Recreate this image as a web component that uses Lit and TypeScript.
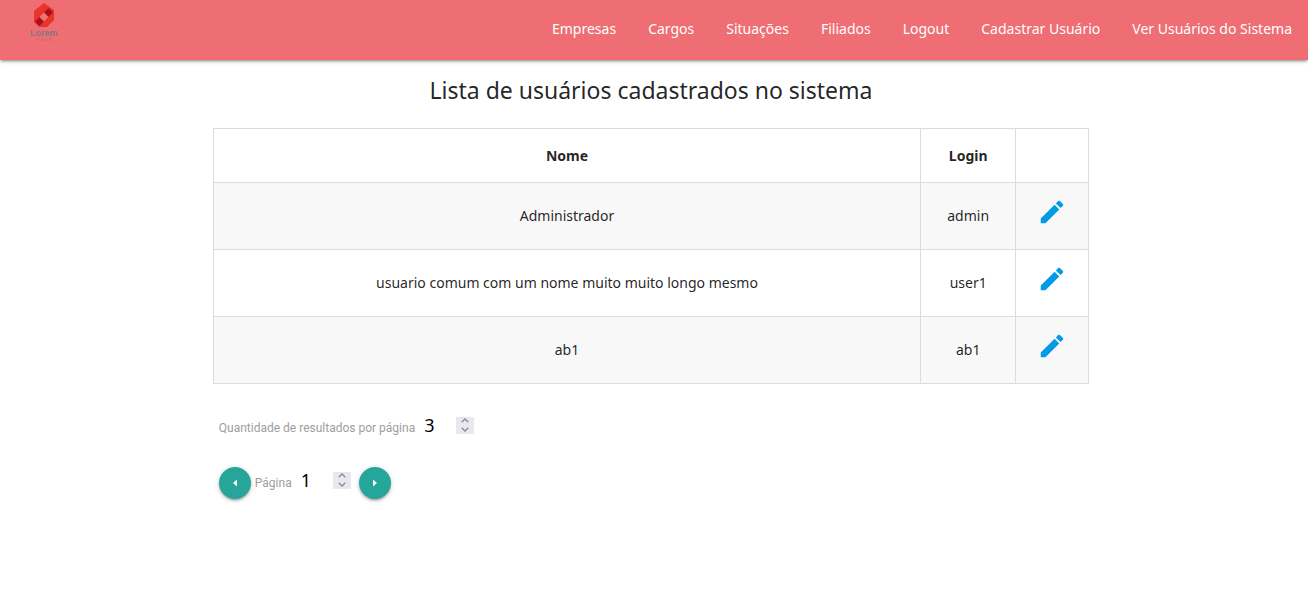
import { LitElement, html, css } from "lit";
import { customElement, property, state } from "lit/decorators.js";

interface User {
  name: string;
  login: string;
}

@customElement("number-stepper")
class NumberStepper extends LitElement {
  @property() label = "";
  @property({ type: Number }) value = 1;

  static styles = css`
    :host {
      display: inline-flex;
      align-items: center;
      box-sizing: border-box;
      height: 44px;
      padding-bottom: 6px;
    }
    label {
      margin-right: 9px;
      padding-top: 6px;
      font: 12px/20px Roboto, sans-serif;
      color: #9e9e9e;
    }
    input {
      width: 32px;
      height: 28px;
      padding: 0;
      border: 0;
      outline: 0;
      background: transparent;
      color: #000;
      font: 18px/28px "Noto Sans", sans-serif;
      appearance: textfield;
    }
    input::-webkit-inner-spin-button {
      appearance: none;
      margin: 0;
    }
    .spin {
      display: flex;
      flex-direction: column;
      width: 18px;
      height: 17px;
      background: #e9e9ed;
    }
    button {
      display: flex;
      flex: 1;
      align-items: center;
      justify-content: center;
      min-height: 0;
      padding: 0;
      border: 0;
      background: transparent;
    }
    svg {
      width: 8px;
      height: 5px;
      fill: none;
      stroke: #8f8f9d;
      stroke-width: 1.5;
    }
  `;

  private step(by: number) {
    this.value = Math.max(1, this.value + by);
  }

  render() {
    return html`
      <label for="field">${this.label}</label>
      <input id="field" type="number" min="1" .value=${String(this.value)} />
      <span class="spin">
        <button aria-label="Aumentar" @click=${() => this.step(1)}>
          <svg viewBox="0 0 8 5"><path d="M.7 4.2 4 1l3.300 3.200" /></svg>
        </button>
        <button aria-label="Diminuir" @click=${() => this.step(-1)}>
          <svg viewBox="0 0 8 5"><path d="M.7.8 4 4 7.300.8" /></svg>
        </button>
      </span>
    `;
  }
}

@customElement("app-root")
class AppRoot extends LitElement {
  @state() private links = [
    "Empresas",
    "Cargos",
    "Situações",
    "Filiados",
    "Logout",
    "Cadastrar Usuário",
    "Ver Usuários do Sistema",
  ];

  @state() private users: User[] = [
    { name: "Administrador", login: "admin" },
    { name: "usuario comum com um nome muito muito longo mesmo", login: "user1" },
    { name: "ab1", login: "ab1" },
  ];

  static styles = css`
    :host {
      display: block;
      font: 14px/22px "Noto Sans", sans-serif;
      color: rgba(0, 0, 0, 0.87);
    }
    nav {
      display: flex;
      justify-content: space-between;
      height: 60px;
      background: #ee6e73;
      box-shadow:
        0 2px 2px 0 rgba(0, 0, 0, 0.14),
        0 3px 1px -2px rgba(0, 0, 0, 0.12),
        0 1px 5px 0 rgba(0, 0, 0, 0.2);
    }
    .logo {
      display: flex;
      flex-direction: column;
      align-items: center;
      margin-left: 30px;
      padding-top: 3px;
      color: #85757d;
      text-decoration: none;
    }
    .logo svg {
      width: 20px;
      height: 24px;
    }
    .word {
      padding-top: 2px;
      font: bold 9px/9px "Liberation Sans", sans-serif;
    }
    .sub {
      font: 4px/4px "Liberation Sans", sans-serif;
      letter-spacing: 1px;
      opacity: 0.7;
    }
    ul {
      display: flex;
      margin: 0;
      padding: 0;
      list-style: none;
    }
    li a {
      display: block;
      padding: 0 16px;
      line-height: 58px;
      color: #fff;
      text-decoration: none;
      white-space: nowrap;
    }
    main {
      width: 67%;
      margin: 0 auto;
      padding-right: 6px;
    }
    h1 {
      margin: 0;
      padding: 14px 0 21px;
      font-size: 23px;
      font-weight: 400;
      line-height: 33px;
      text-align: center;
    }
    table {
      width: 100%;
      border-collapse: collapse;
    }
    th,
    td {
      box-sizing: border-box;
      padding: 0;
      border: 1px solid #dcdcdc;
      text-align: center;
    }
    th {
      height: 54px;
    }
    td {
      height: 67px;
    }
    tbody tr:nth-child(odd) {
      background: #f8f8f8;
    }
    .login {
      width: 95px;
    }
    .action {
      width: 73px;
    }
    .edit {
      display: inline-flex;
      padding-bottom: 8px;
      vertical-align: middle;
    }
    .edit svg {
      width: 30px;
      height: 30px;
      fill: #039be5;
    }
    .controls {
      padding: 22px 6px;
    }
    .pager {
      display: flex;
      align-items: center;
      gap: 4px;
      padding-top: 11px;
    }
    .round {
      display: flex;
      align-items: center;
      justify-content: center;
      width: 32px;
      height: 32px;
      padding: 0;
      border: 0;
      border-radius: 50%;
      background: #26a69a;
      box-shadow:
        0 2px 2px 0 rgba(0, 0, 0, 0.14),
        0 3px 1px -2px rgba(0, 0, 0, 0.12),
        0 1px 5px 0 rgba(0, 0, 0, 0.2);
    }
    .next {
      margin-left: 4px;
    }
    .round svg {
      width: 16px;
      height: 16px;
      fill: #fff;
    }
  `;

  render() {
    return html`
      <nav>
        <a class="logo" href="#">
          <svg viewBox="0 0 20 24" aria-hidden="true">
            <path fill="#e8352b" d="M10 0 20 7V17L13 24H5L0 19V8Z" />
            <path fill="#a90f22" d="M14.500 5 19 9.500 14.500 14 10 9.500Z" />
            <path fill="#a90f22" d="M5.500 14 10 18.500 5.500 23 1 18.500Z" />
            <path fill="#f0736f" d="M10 9.500 14.500 14 10 18.500 5.500 14Z" />
          </svg>
          <span class="word">Lorem</span>
          <span class="sub">IPSUM</span>
        </a>
        <ul>
          ${this.links.map((l) => html`<li><a href="#">${l}</a></li>`)}
        </ul>
      </nav>
      <main>
        <h1>Lista de usuários cadastrados no sistema</h1>
        <table>
          <thead>
            <tr>
              <th>Nome</th>
              <th class="login">Login</th>
              <th class="action"></th>
            </tr>
          </thead>
          <tbody>
            ${this.users.map(
              (u) => html`<tr>
                <td>${u.name}</td>
                <td>${u.login}</td>
                <td>
                  <a class="edit" href="#" aria-label="Editar">
                    <svg viewBox="0 0 24 24">
                      <path
                        d="M3 17.250V21h3.750L17.810 9.940l-3.750-3.750L3 17.250zM20.710 7.040c.39-.39.39-1.020 0-1.410l-2.340-2.340c-.39-.39-1.020-.39-1.410 0l-1.830 1.830 3.750 3.750 1.830-1.830z"
                      />
                    </svg>
                  </a>
                </td>
              </tr>`,
            )}
          </tbody>
        </table>
        <div class="controls">
          <number-stepper label="Quantidade de resultados por página" .value=${3}></number-stepper>
          <div class="pager">
            <button class="round" aria-label="Página anterior">
              <svg viewBox="0 0 16 16"><path d="M10 4.500v7L6 8Z" /></svg>
            </button>
            <number-stepper label="Página" .value=${1}></number-stepper>
            <button class="round next" aria-label="Próxima página">
              <svg viewBox="0 0 16 16"><path d="M6 4.500v7L10 8Z" /></svg>
            </button>
          </div>
        </div>
      </main>
    `;
  }
}
